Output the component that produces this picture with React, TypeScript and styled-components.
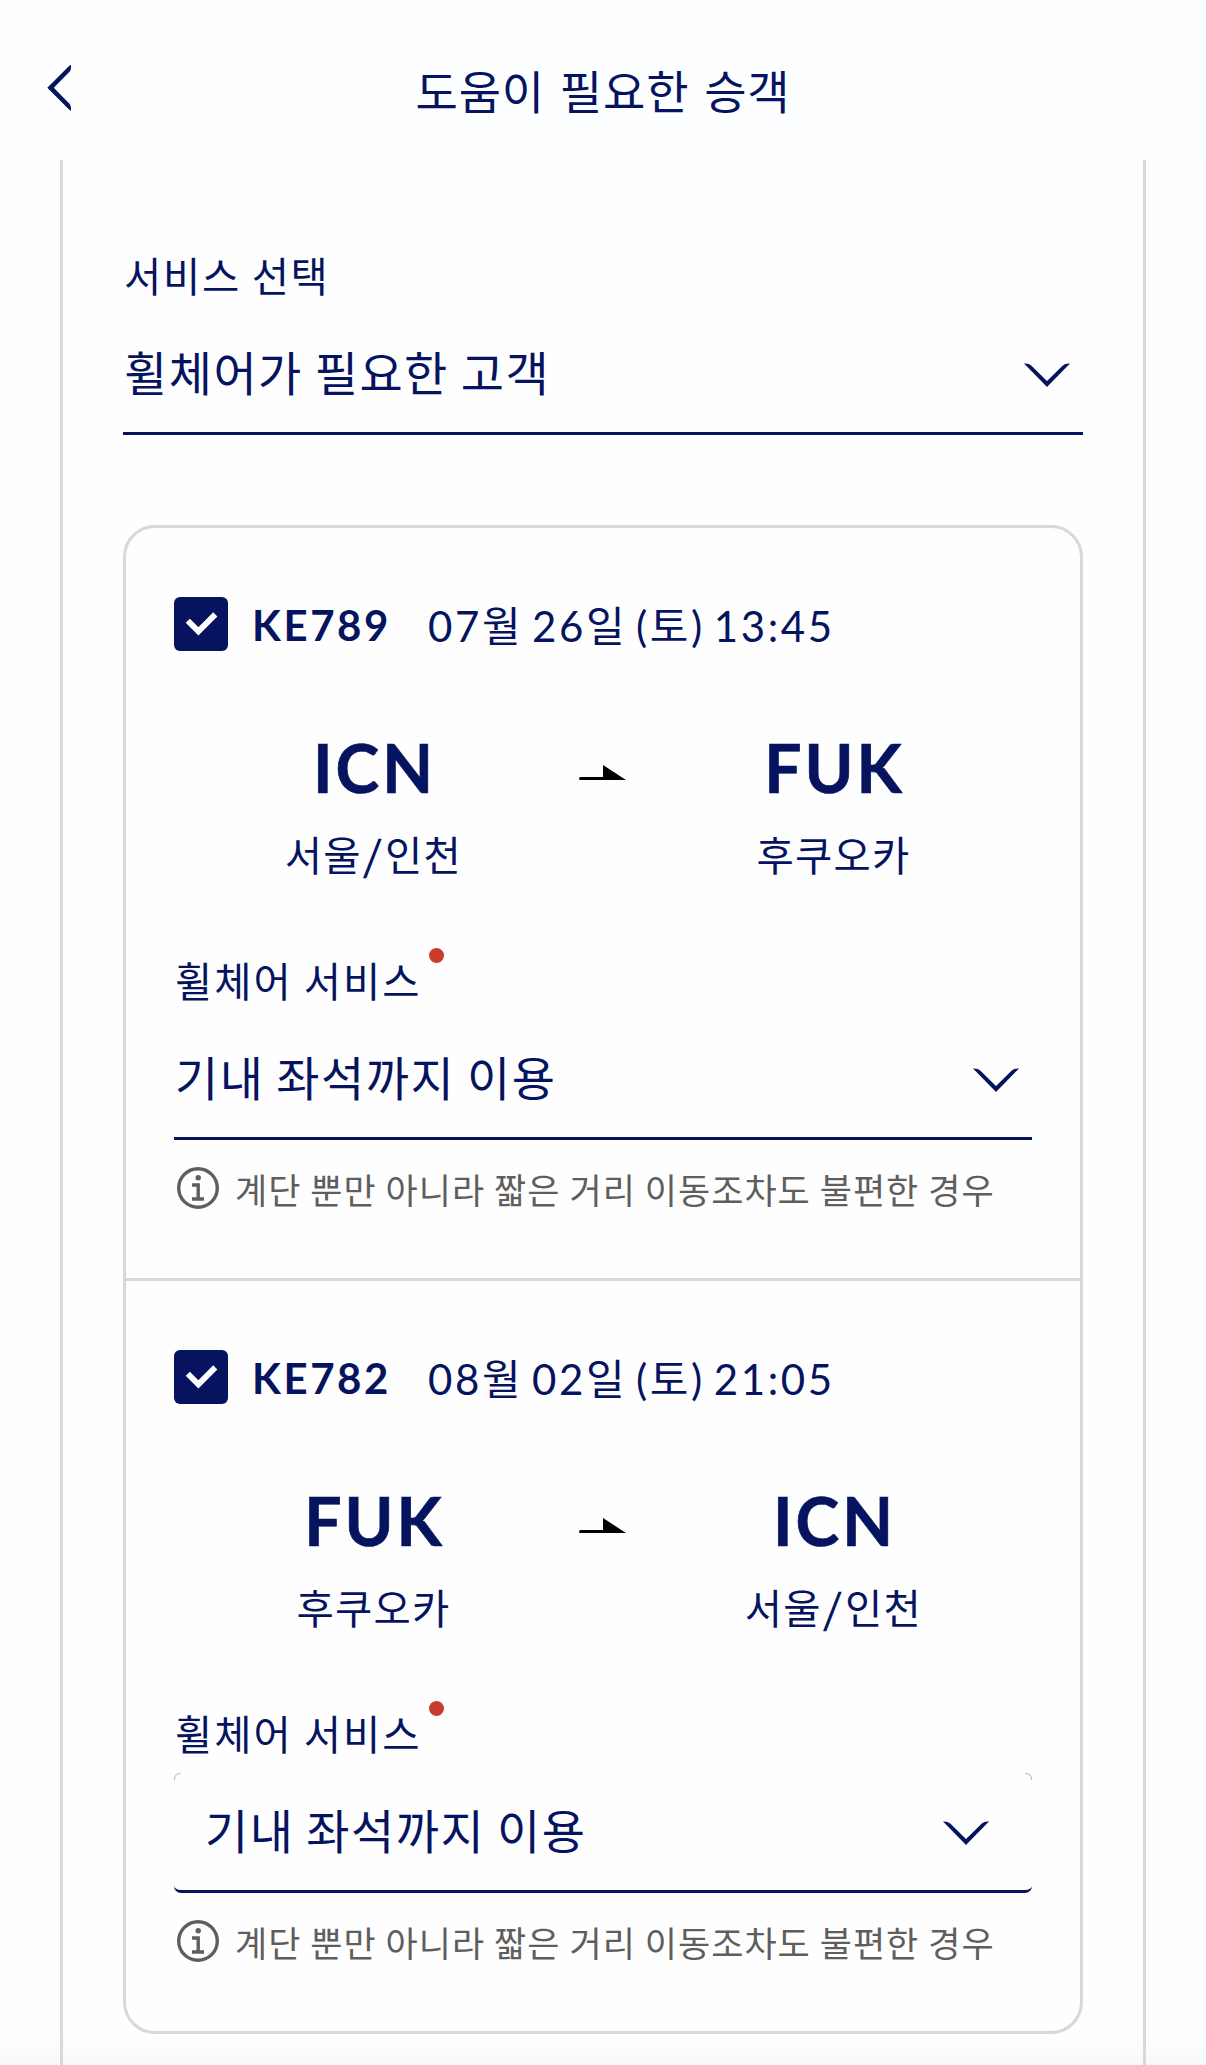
import React from "react";
import styled, { createGlobalStyle, css } from "styled-components";

const navy = "#06145f";
const line = "#d8d8d8";
const kr = '"Noto Sans CJK KR", sans-serif';
const latin = 'Lato, "Noto Sans CJK KR", sans-serif';

const Global = createGlobalStyle`
  * { box-sizing: border-box; }
  body { margin: 0; background: #fefefe; color: ${navy}; font-family: ${kr}; }
`;

const Screen = styled.div`
  width: 1206px;
  height: 2065px;
  overflow: hidden;
  display: flex;
  flex-direction: column;
  background: linear-gradient(to bottom, #fefefe 2036px, #f6f8f9 2065px);
`;
const Header = styled.header`
  flex: none;
  height: 160px;
  padding: 58px 45px 0;
  display: grid;
  grid-template-columns: 60px 1fr 60px;
  align-items: start;
  background: #fcfeff;
`;
const BackButton = styled.button`
  width: 60px;
  height: 60px;
  padding: 0;
  border: 0;
  background: none;
  color: ${navy};
  display: block;
  svg { display: block; }
`;
const Title = styled.h1`
  margin: 0;
  padding-top: 1px;
  line-height: 60px;
  font-size: 46px;
  font-weight: 400;
  letter-spacing: 0.9px;
  word-spacing: 3.5px;
  text-align: center;
  white-space: nowrap;
`;
const Panel = styled.main`
  flex: none;
  width: 1086px;
  height: 1905px;
  margin-left: 60px;
  padding: 83px 60px 0;
  border: solid ${line};
  border-width: 0 3px;
`;
const Label = styled.div<{ $tracking?: number }>`
  display: flex;
  height: 72px;
  padding-left: 1px;
  line-height: 64px;
  font-size: 40.5px;
  letter-spacing: ${(p) => p.$tracking ?? 1.7}px;
  white-space: nowrap;
`;
const Required = styled.i`
  width: 15px;
  height: 15px;
  margin: 0 0 0 7px;
  border-radius: 50%;
  background: #c93c2c;
`;
const Select = styled.div<{ $boxed?: boolean }>`
  display: flex;
  align-items: center;
  justify-content: space-between;
  height: 120px;
  padding: 4px 10px 0 1px;
  border-bottom: 3px solid ${navy};
  font-size: 47px;
  letter-spacing: 1.45px;
  white-space: nowrap;
  ${(p) => p.$boxed && css`
    position: relative;
    padding: 4px 40px 0 31px;
    border-radius: 7px;
    &::before, &::after {
      content: "";
      position: absolute;
      top: 0;
      width: 6px;
      height: 6px;
      border-top: 1px solid rgba(6, 20, 95, 0.3);
    }
    &::before { left: 0; border-left: 1px solid rgba(6, 20, 95, 0.3); border-radius: 6px 0 0 0; }
    &::after { right: 0; border-right: 1px solid rgba(6, 20, 95, 0.3); border-radius: 0 6px 0 0; }
  `}
`;
const Value = styled.span`
  padding-bottom: 11px;
`;
const Card = styled.section`
  height: 1509px;
  margin-top: 90px;
  border: 3px solid ${line};
  border-radius: 32px;
`;
const Flight = styled.article`
  height: 750px;
  padding: 69px 48px 0;
  & + & { height: 753px; border-top: 3px solid ${line}; }
`;
const FlightHead = styled.div`
  display: flex;
  align-items: center;
  height: 54px;
  font-family: ${latin};
  white-space: nowrap;
`;
const Check = styled.span`
  width: 54px;
  height: 54px;
  border-radius: 6px;
  background: ${navy};
  svg { display: block; }
`;
const FlightNo = styled.strong`
  width: 173px;
  margin-left: 24px;
  font-size: 42px;
  font-weight: 700;
  letter-spacing: 2.6px;
  padding-top: 1px;
`;
const FlightDate = styled.span`
  margin-left: 3px;
  padding-bottom: 2px;
  font-size: 42px;
  letter-spacing: 2.6px;
  word-spacing: -4.5px;
`;
const Route = styled.div`
  display: grid;
  grid-template-columns: 398px 62px 398px;
  height: 223px;
  margin-top: 75px;
  margin-bottom: -1px;
`;
const Stop = styled.div`
  display: flex;
  flex-direction: column;
  align-items: center;
`;
const Code = styled.strong`
  height: 84px;
  padding-left: 3px;
  line-height: 84px;
  font-family: ${latin};
  font-size: 66px;
  font-weight: 700;
  letter-spacing: 3px;
  -webkit-text-stroke: 0.7px ${navy};
`;
const City = styled.span`
  padding: 2px 0 0 1px;
  line-height: 84px;
  font-size: 40.5px;
  letter-spacing: 1.3px;
  white-space: nowrap;
`;
const Slash = styled.span`
  display: inline-block;
  margin: 0 3px;
  font-weight: 500;
  transform: skewX(-6deg);
`;
const Arrow = styled.svg`
  margin: 39px 0 0 7px;
`;
const Hint = styled.p`
  display: flex;
  align-items: center;
  height: 42px;
  margin: 27px 0 0 3px;
  color: #5e5e5e;
  font-size: 35px;
  letter-spacing: 1.02px;
  white-space: nowrap;
  svg { flex: none; margin-right: 16px; }
`;

const Chevron = () => (
  <svg width="52" height="30" viewBox="0 0 52 30" fill={navy}>
    <path d="M3 2.5 Q8 2.2 10.5 4.8 L26 20 L41.5 4.8 Q44 2.2 49 2.5 L26 26 Z" />
  </svg>
);

type FlightData = { no: string; date: string; from: [string, string]; to: [string, string]; boxed?: boolean };
const flights: FlightData[] = [
  { no: "KE789", date: "07월 26일 (토) 13:45", from: ["ICN", "서울/인천"], to: ["FUK", "후쿠오카"] },
  { no: "KE782", date: "08월 02일 (토) 21:05", from: ["FUK", "후쿠오카"], to: ["ICN", "서울/인천"], boxed: true },
];

const Airport = ({ code, city }: { code: string; city: string }) => {
  const [first, second] = city.split("/");
  return (
    <Stop>
      <Code>{code}</Code>
      <City>{first}{second && <><Slash>/</Slash>{second}</>}</City>
    </Stop>
  );
};

const FlightItem = ({ f }: { f: FlightData }) => (
  <Flight>
    <FlightHead>
      <Check>
        <svg width="54" height="54" viewBox="0 0 54 54" fill="none" stroke="#fff" strokeWidth="5.8">
          <path d="M13.8 23.8 L24.4 34.4 L41.3 17.4" />
        </svg>
      </Check>
      <FlightNo>{f.no}</FlightNo>
      <FlightDate>{f.date}</FlightDate>
    </FlightHead>
    <Route>
      <Airport code={f.from[0]} city={f.from[1]} />
      <Arrow width="48" height="16" viewBox="0 0 48 16"><path d="M1.5 12 H24 V0 L47 15 H1.5 a1.5 1.5 0 0 1 0 -3z" /></Arrow>
      <Airport code={f.to[0]} city={f.to[1]} />
    </Route>
    <Label $tracking={2}>휠체어 서비스<Required /></Label>
    <Select $boxed={f.boxed}><Value>기내 좌석까지 이용</Value><Chevron /></Select>
    <Hint>
      <svg width="42" height="42" viewBox="0 0 42 42" fill="none" stroke="#5e5e5e" strokeWidth="3.4">
        <circle cx="21" cy="21" r="19.3" />
        <circle cx="21.2" cy="10.8" r="2.7" fill="#5e5e5e" stroke="none" />
        <path d="M15 18 H21.2 V32 M15 32 H27" />
      </svg>
      계단 뿐만 아니라 짧은 거리 이동조차도 불편한 경우
    </Hint>
  </Flight>
);

export default function App() {
  return (
    <>
      <Global />
      <Screen>
        <Header>
          <BackButton aria-label="뒤로">
            <svg width="26" height="60" viewBox="0 0 26 60" fill={navy}>
              <path d="M2.3 29.8 L23 9 Q25 7.3 26 6.7 Q26.6 12 24 14.3 L8.8 29.8 L24 45.3 Q26.6 47.6 26 53 Q25 52.3 23 50.6 Z" />
            </svg>
          </BackButton>
          <Title>도움이 필요한 승객</Title>
        </Header>
        <Panel>
          <Label>서비스 선택</Label>
          <Select><Value>휠체어가 필요한 고객</Value><Chevron /></Select>
          <Card>{flights.map((f) => <FlightItem key={f.no} f={f} />)}</Card>
        </Panel>
      </Screen>
    </>
  );
}
